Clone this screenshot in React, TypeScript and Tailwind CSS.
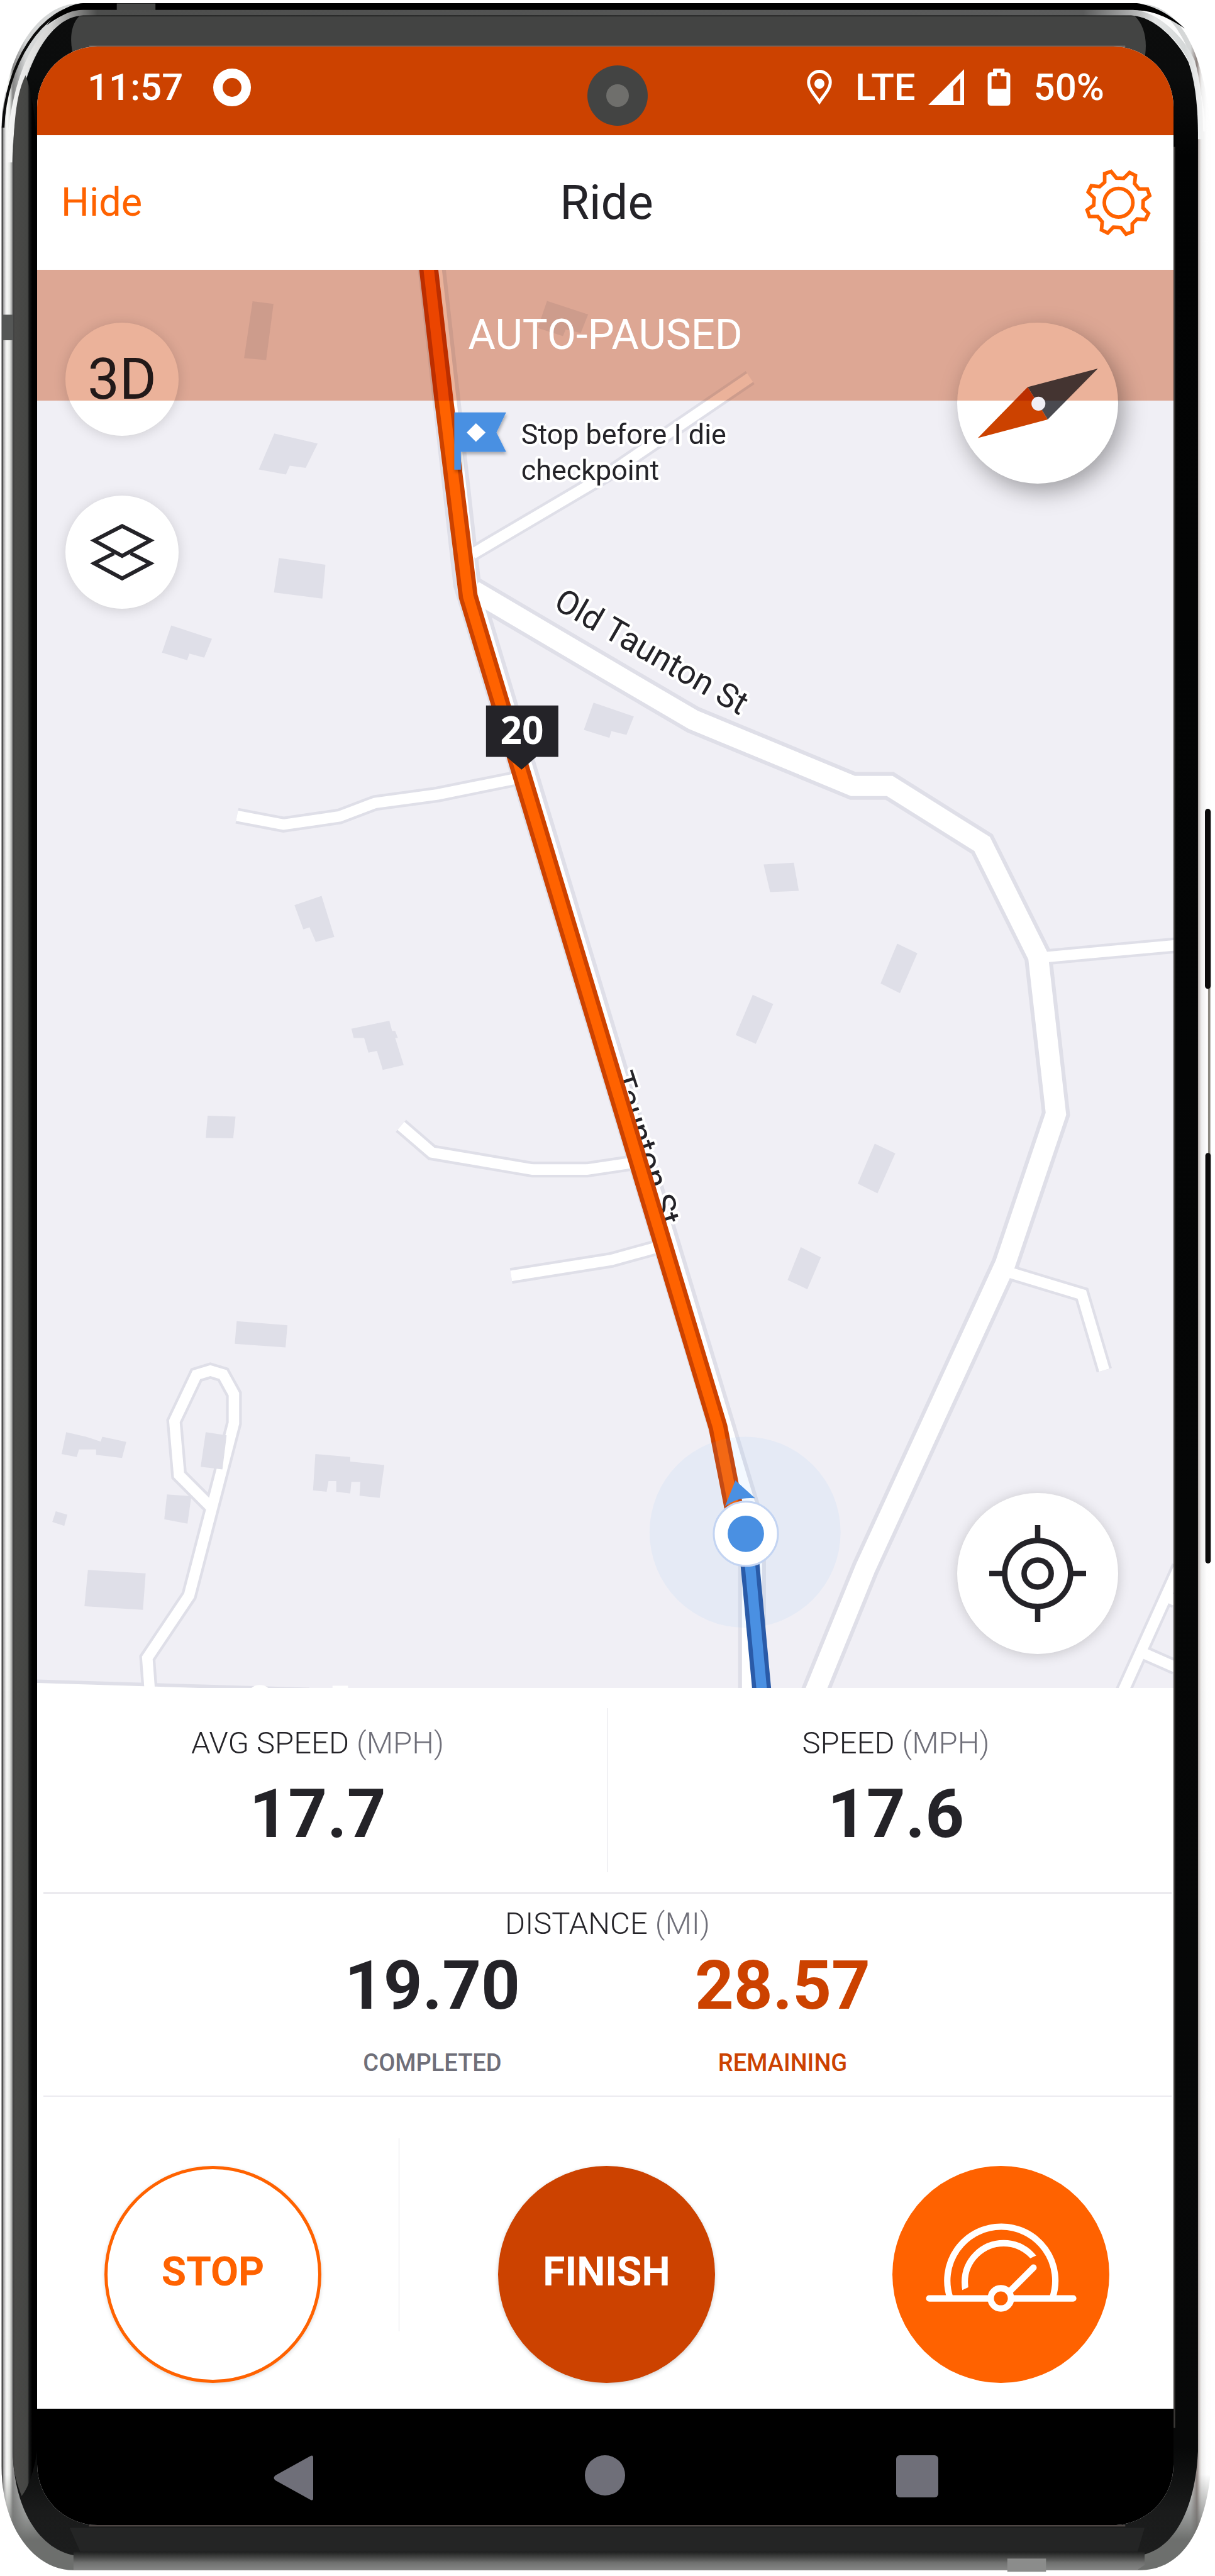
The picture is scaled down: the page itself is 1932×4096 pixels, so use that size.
import React from "react";

function DeviceCase() {
  return (
    <svg
      aria-hidden="true"
      className="absolute inset-0 h-full w-full"
      viewBox="0 0 3142 6663"
      preserveAspectRatio="none"
    >
      <defs>
        <linearGradient id="rim" gradientUnits="userSpaceOnUse" x1="4" y1="0" x2="3142" y2="0">
          <stop offset="0" stopColor="#474747" />
          <stop offset="0.0012" stopColor="#555" />
          <stop offset="0.0016" stopColor="#a0a0a0" />
          <stop offset="0.0034" stopColor="#e6e6e6" />
          <stop offset="0.0045" stopColor="#f8f9f7" />
          <stop offset="0.0068" stopColor="#e4e6e3" />
          <stop offset="0.0093" stopColor="#858585" />
          <stop offset="0.02" stopColor="#d5d7d7" />
          <stop offset="0.98" stopColor="#d5d7d7" />
          <stop offset="0.985" stopColor="#8b807d" />
          <stop offset="0.9875" stopColor="#d8d4d2" />
          <stop offset="0.989" stopColor="#efefef" />
          <stop offset="0.993" stopColor="#fdfdfd" />
          <stop offset="0.998" stopColor="#ffffff" />
        </linearGradient>
        <linearGradient id="chin" gradientUnits="userSpaceOnUse" x1="0" y1="6400" x2="0" y2="6570">
          <stop offset="0" stopColor="#777977" stopOpacity="0" />
          <stop offset="1" stopColor="#6d6f6d" />
        </linearGradient>
        <linearGradient id="lip" gradientUnits="userSpaceOnUse" x1="0" y1="6600" x2="0" y2="6648">
          <stop offset="0" stopColor="#1d1e1e" />
          <stop offset="0.35" stopColor="#4b4c4b" />
          <stop offset="0.6" stopColor="#707170" />
          <stop offset="1" stopColor="#868786" />
        </linearGradient>
        <linearGradient id="body" gradientUnits="userSpaceOnUse" x1="0" y1="0" x2="0" y2="6663">
          <stop offset="0" stopColor="#0c0d0d" />
          <stop offset="0.03" stopColor="#0b0c0c" />
          <stop offset="0.06" stopColor="#020303" />
          <stop offset="0.95" stopColor="#070808" />
          <stop offset="0.975" stopColor="#1a1b1b" />
          <stop offset="1" stopColor="#1d1e1e" />
        </linearGradient>
        <linearGradient id="leftEdge" gradientUnits="userSpaceOnUse" x1="33" y1="0" x2="96" y2="0">
          <stop offset="0" stopColor="#3f3f3f" />
          <stop offset="0.1" stopColor="#4a4a48" />
          <stop offset="0.6" stopColor="#454644" />
          <stop offset="0.68" stopColor="#151616" />
          <stop offset="0.8" stopColor="#000" />
        </linearGradient>
        <linearGradient id="topLine" gradientUnits="userSpaceOnUse" x1="20" y1="0" x2="3110" y2="0">
          <stop offset="0" stopColor="#f6f6f5" />
          <stop offset="0.035" stopColor="#d4d4d3" />
          <stop offset="0.075" stopColor="#4c4d4c" />
          <stop offset="0.9" stopColor="#5b5c5c" />
          <stop offset="0.945" stopColor="#b5b6b6" />
          <stop offset="0.96" stopColor="#e3e5e5" />
          <stop offset="0.985" stopColor="#d5d8d8" />
          <stop offset="1" stopColor="#f3f3f3" />
        </linearGradient>
      </defs>
      <rect width="3142" height="6663" fill="#fff" />
      <path
        d="M4 330C10 140 100 9 205 9H2945C3060 12 3115 150 3132 340V6380C3120 6540 3060 6646 2950 6648H190C90 6648 4 6540 4 6380Z"
        fill="url(#rim)"
      />
      <path
        d="M2950 9C3040 24 3100 140 3120 340H3098L2900 40Z"
        fill="#fbfbfb"
      />
      <path
        d="M4 6380C4 6540 90 6648 190 6648H2950C3060 6646 3120 6540 3132 6380Z"
        fill="url(#chin)"
      />
      <path
        d="M8 330C14 170 105 13 230 12"
        fill="none"
        stroke="#0b0b0b"
        strokeWidth="7"
      />
      <path d="M120 66C150 30 180 10 215 8H2940C2985 14 3030 40 3064 74C3030 52 2990 28 2940 27H215C180 28 150 44 120 66Z" fill="#000" />
      <rect x="302" y="9" width="100" height="18" fill="#454645" />
      <path
        d="M24 420C27 200 110 34 215 33H2930C2990 36 3055 100 3082 158C3098 210 3104 290 3104 360"
        fill="none"
        stroke="url(#topLine)"
        strokeWidth="15"
      />
      <path
        d="M33 420C38 210 116 42 215 40H2925C2985 42 3045 105 3073 160C3091 210 3098 280 3098 350V6340C3092 6480 3040 6606 2930 6612H210C110 6606 36 6500 33 6340Z"
        fill="url(#body)"
      />
      <path
        d="M33 420C36 300 44 240 66 195C84 240 96 330 96 420V6340C88 6390 76 6430 56 6456C42 6420 33 6390 33 6340Z"
        fill="url(#leftEdge)"
      />
      <path d="M205 42H2935C2960 66 2970 110 2958 160H195C178 115 180 66 205 42Z" fill="#434443" />
      <path d="M180 6538H2960L2940 6606H210Z" fill="#242525" />
      <path d="M190 6600H2960V6634L2940 6648H190Z" fill="url(#lip)" />
      <rect x="230" y="118" width="2680" height="4" fill="#6f6865" />
      <rect x="3035" y="380" width="4" height="5900" fill="#3b3937" />
      <rect x="6" y="814" width="28" height="66" fill="#555756" />
      <rect x="2605" y="6618" width="100" height="34" fill="#8b8c8b" />
      <rect x="230" y="6531" width="2680" height="4" fill="#4e4644" />
      <rect x="3124" y="2500" width="6" height="500" fill="#8d8a82" />
      <rect x="3116" y="2092" width="15" height="466" rx="8" fill="#0a0a0a" />
      <rect x="3117" y="2982" width="14" height="1062" rx="7" fill="#0a0a0a" />
    </svg>
  );
}

function StatusBar() {
  return (
    <div className="relative flex h-[141px] items-center justify-between bg-[#cc4200] pr-[110px] pb-3 pl-20 text-[60px] font-medium text-white">
      <div className="flex items-center gap-12">
        <span>11:57</span>
        <span className="h-[60px] w-[60px] rounded-full border-[15px] border-white" />
      </div>
      <div className="absolute top-[30px] left-[51.1%] flex h-24 w-24 -translate-x-1/2 items-center justify-center rounded-full bg-[#434443]">
        <span className="h-9 w-9 rounded-full bg-[#6f6f6c]" />
      </div>
      <div className="flex items-center gap-[37px]">
        <svg className="h-14 w-10" viewBox="0 0 64 91" aria-hidden="true">
          <path
            d="M32 83C20 65 4 49 4 32A28 28 0 0 1 60 32C60 49 44 65 32 83Z"
            fill="none"
            stroke="#fff"
            strokeWidth="8"
          />
          <circle cx="32" cy="36" r="13" fill="#fff" />
        </svg>
        <div className="flex items-center gap-5">
          <span>LTE</span>
          <svg className="h-[57px] w-[57px]" viewBox="0 0 93 93" aria-hidden="true">
            <path d="M93 0V93H0ZM83 24L65 44V83H83Z" fill="#fff" fillRule="evenodd" />
          </svg>
        </div>
        <svg className="h-[59px] w-[37px]" viewBox="0 0 59 97" aria-hidden="true">
          <path
            d="M14 2Q14 0 16 0H42Q44 0 44 2V10H50Q59 10 59 19V88Q59 97 50 97H9Q0 97 0 88V19Q0 10 9 10H14ZM10 20V53H49V20H34V11H24V20Z"
            fill="#fff"
            fillRule="evenodd"
          />
        </svg>
        <span>50%</span>
      </div>
    </div>
  );
}

function Header() {
  return (
    <header className="grid h-[214px] grid-cols-[1fr_auto_1fr] items-center bg-white pr-[34px] pl-[38px]">
      <button className="justify-self-start text-[63px] text-[#ff6200]">Hide</button>
      <h1 className="text-[76px] text-[#242328]">Ride</h1>
      <button aria-label="Settings" className="justify-self-end">
        <svg className="h-[107px] w-[107px]" viewBox="198 412 522 522" fill="none" stroke="#ff6200" strokeWidth="28">
          <path d="M352 513L352 447L402 430L443 481L500 483L545 438L591 462L584 524L619 566L683 566L701 617L651 656L649 712L692 755L668 803L604 798L566 836L566 898L518 916L478 865L419 862L376 907L327 883L333 820L299 780L234 780L216 728L267 692L270 635L224 590L248 541L313 548Z" />
          <circle cx="460" cy="672" r="111" />
        </svg>
      </button>
    </header>
  );
}

const WIDE_ROADS = [
  "M1116 690L1208 1510L1945 3950V4380",
  "M1225 1528L1571 1732L1793 1862L2206 2033H2301L2540 2183L2685 2474L2731 2881L2600 3269L2238 4056L2106 4380",
];

const SMALL_ROADS = [
  "M1222 1433L1580 1222L1940 977",
  "M613 2110L733 2133L878 2112L970 2077L1132 2055L1335 2014",
  "M2690 2477L3040 2445",
  "M2600 3288L2798 3348L2856 3544",
  "M1037 2912L1117 2981L1377 3025H1518L1660 3004",
  "M1322 3300L1581 3259L1700 3226",
  "M2900 4384L3050 4052",
  "M2954 4274L3040 4312",
  "M3010 4126L3040 4140",
  "M387 4368L381 4288L489 4127L605 3681V3606L577 3555L544 3545L508 3556L451 3676L463 3815L543 3895",
];

const BUILDING_GROUPS = [
  {
    place: "scale(1.002 0.7015)",
    shapes: ["652,1111 706,1121 687,1328 630,1321", "1412,1110 1518,1160 1499,1228 1460,1215 1453,1240 1388,1210"],
  },
  {
    place: "translate(0 1000) scale(1.002 1.0842)",
    shapes: [
      "708,112 820,136 789,194 748,189 738,210 668,198",
      "720,409 840,425 832,506 707,491",
      "442,570 547,602 527,647 489,637 483,653 418,635",
      "760,1237 830,1215 863,1313 815,1325 799,1290 783,1295",
      "1532,754 1636,787 1617,831 1578,822 1573,838 1507,819",
    ],
  },
  {
    place: "translate(1571 1000) scale(1.002 1.0842)",
    shapes: [
      "403,1140 481,1136 494,1203 420,1206",
      "748,1329 800,1352 755,1447 705,1424",
      "375,1451 428,1473 383,1568 331,1547",
    ],
  },
  {
    place: "translate(0 2600) scale(1.002 1.148)",
    shapes: [
      "907,53 1005,35 1012,58 1020,58 1027,74 1020,74 1042,135 988,146 973,103 951,107 940,74 913,74",
      "536,249 608,251 602,300 531,299",
      "611,712 742,721 737,771 606,763",
      "171,962 222,972 260,983 264,972 326,984 315,1020 248,1013 248,1001 204,1001 198,1018 159,1011",
      "531,962 585,969 574,1046 518,1040",
      "431,1102 494,1106 484,1168 424,1158",
      "144,1140 174,1148 166,1173 135,1164",
      "227,1272 376,1280 369,1362 218,1354",
      "814,1011 904,1018 904,1028 992,1036 980,1110 928,1105 930,1074 907,1074 904,1100 868,1096 868,1072 848,1072 843,1096 808,1093",
    ],
  },
  {
    place: "translate(1571 2600) scale(1.002 1.148)",
    shapes: ["690,312 743,334 697,424 646,402", "499,545 551,568 516,640 465,619"],
  },
];

const ROUTE = "M1108 690L1148 1035L1211 1543L1529 2600L1857 3691L1898 3900";
const ROUTE_AHEAD = "M1934 3985L1971 4380";

function MapCanvas() {
  return (
    <svg
      className="block h-[2255px] w-full bg-[#f0eff5]"
      viewBox="96 698 2939 3668"
      preserveAspectRatio="xMidYMid slice"
      fontFamily="Roboto, sans-serif"
      role="img"
      aria-label="Route map"
    >
      <defs>
        <filter id="flagShadow" x="-20%" y="-20%" width="150%" height="150%">
          <feDropShadow dx="2" dy="6" stdDeviation="4" floodOpacity="0.3" />
        </filter>
      </defs>
      <g fill="none" stroke="#dfdfe8">
        {SMALL_ROADS.map((d) => (
          <path key={d} d={d} strokeWidth="41" />
        ))}
        {WIDE_ROADS.map((d) => (
          <path key={d} d={d} strokeWidth="72" />
        ))}
      </g>
      <path d="M96 4344L800 4365V4370H96Z" fill="#dfdfe8" />
      <g fill="none" stroke="#fff">
        {SMALL_ROADS.map((d) => (
          <path key={d} d={d} strokeWidth="27" />
        ))}
        {WIDE_ROADS.map((d) => (
          <path key={d} d={d} strokeWidth="52" />
        ))}
      </g>
      <path d="M96 4353L400 4362L520 4366V4370H96Z" fill="#fff" />
      <ellipse cx="672" cy="4376" rx="26" ry="18" fill="#fff" />
      <rect x="860" y="4360" width="40" height="10" fill="#fff" />
      <g fill="#dfdfe8">
        {BUILDING_GROUPS.map((group) => (
          <g key={group.place} transform={group.place}>
            {group.shapes.map((points) => (
              <polygon key={points} points={points} />
            ))}
          </g>
        ))}
      </g>

      <g fill="#242328" stroke="#fff" strokeWidth="14" strokeLinejoin="round" style={{ paintOrder: "stroke" }}>
        <text x="1348" y="1149" fontSize="73">
          Stop before I die
        </text>
        <text x="1348" y="1242" fontSize="73">
          checkpoint
        </text>
        <text transform="translate(1428 1571) rotate(30)" fontSize="86">
          Old Taunton St
        </text>
        <text transform="translate(1577 2783) rotate(72)" fontSize="86">
          Taunton St
        </text>
      </g>

      <g fill="none">
        <path d={ROUTE} stroke="#cc4200" strokeWidth="49" />
        <path d={ROUTE} stroke="#ff6200" strokeWidth="27" />
        <circle cx="1927" cy="3963" r="247" fill="#6ab0ff" fillOpacity="0.08" />
        <path d={ROUTE_AHEAD} stroke="#2a5ba8" strokeWidth="49" />
        <path d={ROUTE_AHEAD} stroke="#4a90e2" strokeWidth="27" />
      </g>
      <path d="M1902 3829L1953 3875Q1907 3871 1875 3896Z" fill="#4a90e2" />
      <circle cx="1929" cy="3967" r="83" fill="#fff" stroke="#c3d4f2" strokeWidth="5" />
      <circle cx="1929" cy="3967" r="47" fill="#4a90e2" />

      <path d="M1175 1067H1309L1284 1119L1309 1169H1192V1215H1175Z" fill="#4a90e2" filter="url(#flagShadow)" />
      <path d="M1231 1095L1256 1119L1231 1143L1207 1119Z" fill="#fff" />

      <path d="M1257 1825H1444V1958H1387L1349 1991L1310 1958H1257Z" fill="#242328" />
      <text x="1350" y="1925" fontFamily="'Noto Sans', sans-serif" fontSize="98" fontWeight="700" fill="#fff" textAnchor="middle">
        20
      </text>
    </svg>
  );
}

function MapPanel() {
  return (
    <section className="relative isolate">
      <MapCanvas />
      <button className="absolute top-[84px] left-[45px] h-[180px] w-[180px] rounded-full bg-white text-[90px] text-[#242328] shadow-[0_2px_20px_rgba(0,0,0,0.15)]">
        3D
      </button>
      <button
        aria-label="Map layers"
        className="absolute top-[359px] left-[45px] flex h-[180px] w-[180px] items-center justify-center rounded-full bg-white shadow-[0_2px_20px_rgba(0,0,0,0.15)]"
      >
        <svg className="h-[93px] w-[103px]" viewBox="230 1353 167 150" fill="none" stroke="#242328" strokeWidth="10">
          <path d="M241 1397L313 1360L386 1397L313 1437Z" />
          <path d="M292 1430L241 1456L313 1495L386 1456L335 1430" />
        </svg>
      </button>
      <button
        aria-label="Compass"
        className="absolute top-[84px] right-[88px] h-64 w-64 rounded-full bg-white shadow-[8px_12px_36px_rgba(0,0,0,0.35)]"
      >
        <svg className="h-64 w-64" viewBox="2477 835 416 417">
          <path d="M2841 954L2659 1002L2711 1086Z" fill="#4a4a50" />
          <path d="M2530 1134L2659 1002L2711 1086Z" fill="#cc4200" />
        </svg>
      </button>
      <button
        aria-label="Center on my location"
        className="absolute right-[88px] bottom-[54px] flex h-64 w-64 items-center justify-center rounded-full bg-white shadow-[0_2px_20px_rgba(0,0,0,0.18)]"
      >
        <svg className="h-[154px] w-[154px]" viewBox="-125 -125 250 250" fill="none" stroke="#242328" strokeWidth="14">
          <circle r="85" />
          <circle r="35" />
          <path d="M-125 0H-85M85 0H125M0 -125V-85M0 85V125" />
        </svg>
      </button>
      <div className="pointer-events-none absolute inset-x-0 top-0 h-52 bg-[#ebb29a] mix-blend-multiply" />
      <p className="pointer-events-none absolute inset-x-0 top-0 text-center text-[67px] leading-[206px] text-white">
        AUTO-PAUSED
      </p>
      <svg
        className="pointer-events-none absolute top-[84px] right-[88px] h-64 w-64"
        viewBox="2477 835 416 417"
        aria-hidden="true"
      >
        <circle cx="2687" cy="1045" r="18" fill="#f0eff5" />
      </svg>
    </section>
  );
}

function StatLabel({ name, unit }: { name: string; unit: string }) {
  return (
    <h2 className="text-[49px] leading-[64px] font-light text-[#242328]">
      {name} <span className="text-[#6f6f79]">({unit})</span>
    </h2>
  );
}

function StatValue({ children }: { children: string }) {
  return <p className="text-[108px] leading-[120px] font-bold">{children}</p>;
}

function SpeedRow() {
  return (
    <section className="mr-[3px] ml-[10px] grid h-[327px] grid-cols-2 border-b-2 border-[#e3e2e8] py-8 text-center text-[#242328]">
      <div className="flex flex-col gap-5 border-r border-[#e3e2e8] pt-6 pr-6">
        <StatLabel name="AVG SPEED" unit="MPH" />
        <StatValue>17.7</StatValue>
      </div>
      <div className="flex flex-col gap-5 pt-6 pl-5">
        <StatLabel name="SPEED" unit="MPH" />
        <StatValue>17.6</StatValue>
      </div>
    </section>
  );
}

function DistanceRow() {
  return (
    <section className="mr-[3px] ml-[10px] h-[323px] border-b-2 border-[#ecebf0] pt-4 text-center">
      <StatLabel name="DISTANCE" unit="MI" />
      <div className="mt-[6px] flex justify-center">
        <div className="w-[557px] text-[#242328]">
          <StatValue>19.70</StatValue>
          <p className="mt-[39px] text-[38px] leading-[48px] font-medium text-[#6f6f79]">COMPLETED</p>
        </div>
        <div className="w-[557px] text-[#cc4200]">
          <StatValue>28.57</StatValue>
          <p className="mt-[39px] text-[38px] leading-[48px] font-medium">REMAINING</p>
        </div>
      </div>
    </section>
  );
}

function Actions() {
  return (
    <section className="flex items-start pt-[66px] pr-[102px] pb-[41px] pl-[107px]">
      <button className="mt-11 h-[345px] w-[345px] rounded-full border-[5px] border-[#ff6200] bg-white pb-2 text-[64px] font-bold text-[#ff6200] shadow-[0_2px_6px_rgba(0,0,0,0.15)]">
        STOP
      </button>
      <div className="flex-[123]" />
      <div className="h-[307px] w-px bg-[#e3e2e8]" />
      <div className="flex-[158]" />
      <button className="mt-11 h-[345px] w-[345px] rounded-full bg-[#cc4200] pb-2 text-[64px] font-bold text-white shadow-[0_2px_6px_rgba(0,0,0,0.2)]">
        FINISH
      </button>
      <div className="flex-[283]" />
      <button aria-label="Dashboard" className="mt-11 h-[345px] w-[345px] rounded-full bg-[#ff6200]">
        <svg className="h-[345px] w-[345px]" viewBox="28 30 1496 1496" fill="none" stroke="#fff" strokeWidth="44">
          <clipPath id="dialCut">
            <path d="M300 984L1200 563V400H300Z" />
          </clipPath>
          <path d="M426 940A372.5 372.5 0 1 1 1132 940" />
          <circle cx="795" cy="831" r="268" clipPath="url(#dialCut)" />
          <path d="M282 943H1275M1001 731L830 902" strokeLinecap="round" />
          <circle cx="776" cy="943" r="70" fill="#ff6200" />
        </svg>
      </button>
    </section>
  );
}

function NavigationBar() {
  return (
    <nav className="flex h-[185px] justify-between bg-black pt-[74px] pr-[374px] pl-[376px]">
      <button aria-label="Back" className="self-start">
        <svg className="h-[72px] w-[63px]" viewBox="0 0 63 72">
          <path d="M59 1Q63 -1 63 4V68Q63 73 59 71L3 40Q-2 36 3 32Z" fill="#6f6f79" />
        </svg>
      </button>
      <button aria-label="Home" className="h-16 w-16 rounded-full bg-[#6f6f79]" />
      <button aria-label="Recent apps" className="h-[67px] w-[67px] rounded-[6px] bg-[#6f6f79]" />
    </nav>
  );
}

export default function App() {
  return (
    <div className="relative bg-white pt-[74px] pr-[66px] pb-[81px] pl-[59px] font-['Roboto',sans-serif]">
      <DeviceCase />
      <main className="relative overflow-hidden rounded-[96px] bg-white">
        <StatusBar />
        <Header />
        <MapPanel />
        <SpeedRow />
        <DistanceRow />
        <Actions />
        <NavigationBar />
      </main>
    </div>
  );
}
